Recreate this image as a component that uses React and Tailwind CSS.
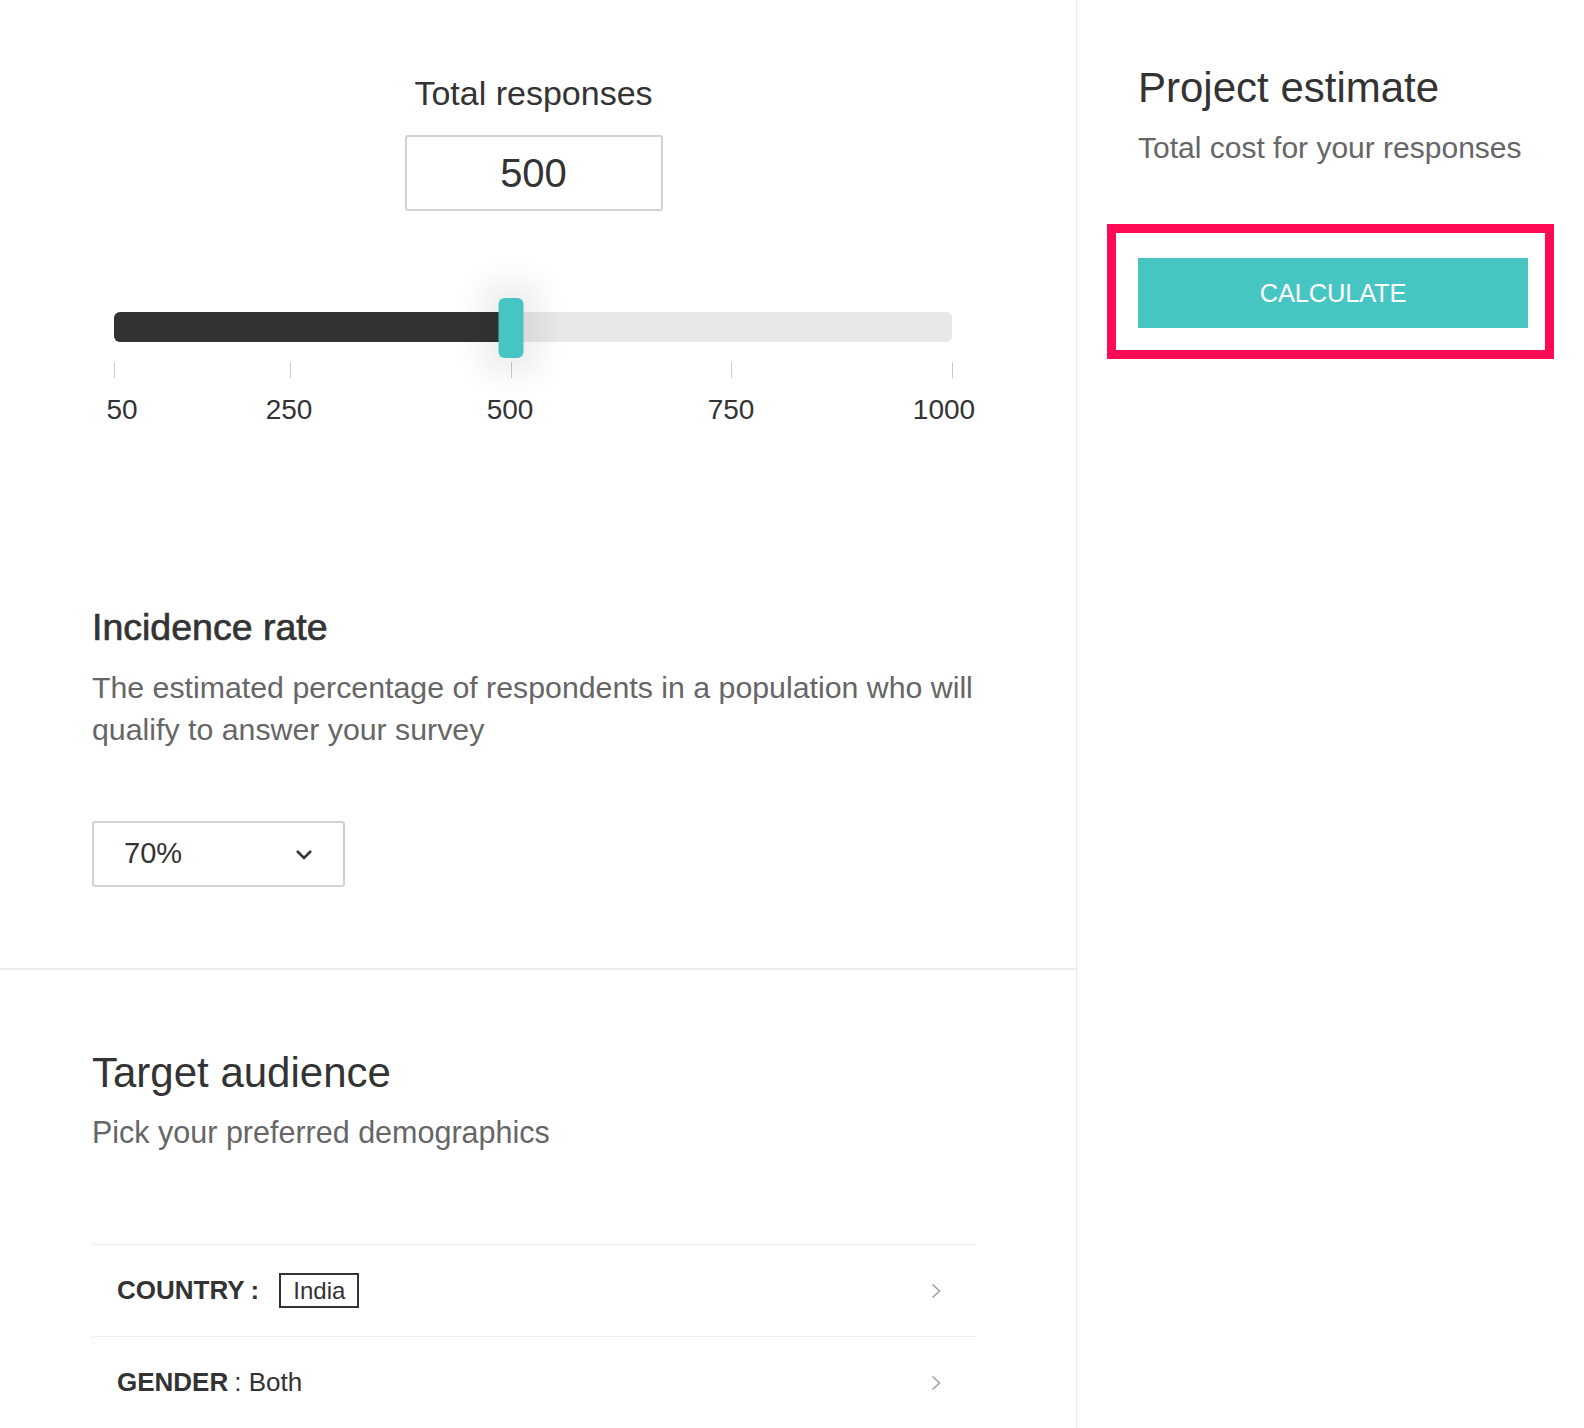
import { useState } from 'react';

const MIN = 50;
const MAX = 1000;
const TRACK_W = 838;

// label centres are nudged inwards at both ends so they stay under the track
const marks = [
  { value: 50, labelX: 8 },
  { value: 250, labelX: 175 },
  { value: 500, labelX: 396 },
  { value: 750, labelX: 617 },
  { value: 1000, labelX: 830 },
];

const toX = (v) => ((v - MIN) / (MAX - MIN)) * TRACK_W;

function Chevron({ className }) {
  return (
    <svg viewBox="0 0 10 16" className={className} fill="none" stroke="currentColor" strokeWidth="1.6">
      <path d="M1.5 1.5 L8.5 8 L1.5 14.5" />
    </svg>
  );
}

function ResponseSlider({ value }) {
  const x = toX(value);
  return (
    <div className="relative ml-[22px] mt-[86px] h-[129px] w-[838px]">
      <div className="absolute left-0 right-0 top-[15px] h-[30px] overflow-hidden rounded-[6px] bg-[#e8e8e8]">
        <div className="h-full bg-[#333333]" style={{ width: x }} />
      </div>
      {marks.map((m) => (
        <div key={m.value}>
          <div className="absolute top-[65px] h-[16px] w-px bg-[#cccccc]" style={{ left: toX(m.value) }} />
          <span
            className="absolute top-[97px] -translate-x-1/2 text-[28px] leading-[32px] text-[#333333]"
            style={{ left: m.labelX }}
          >
            {m.value}
          </span>
        </div>
      ))}
      <div
        className="absolute top-px h-[60px] w-[25px] -translate-x-1/2 rounded-[6px] bg-[#46c5c3] shadow-[0_0_30px_18px_rgba(0,0,0,0.07)]"
        style={{ left: x }}
      />
    </div>
  );
}

function AudienceRow({ label, children }) {
  return (
    <div className="flex h-[92px] items-center justify-between border-t border-dotted border-[#dddddd] pl-[25px] pr-[34px] text-[26px] text-[#333333]">
      <div className="flex items-center">
        <span className="font-bold">{label}</span>
        {children}
      </div>
      <Chevron className="h-[16px] w-[10px] text-[#a0a0a0]" />
    </div>
  );
}

export default function App() {
  const [responses] = useState(500);

  return (
    <div className="flex min-h-[1428px] w-full bg-white font-['Liberation_Sans',Arial,sans-serif] text-[#333333]">
      <div className="w-[1077px] shrink-0 border-r border-[#e9e9e9]">
        <section className="pb-[81px] pl-[92px] pr-[101px] pt-[73px]">
          <h2 className="text-center text-[34px] leading-[40px]">Total responses</h2>
          <div className="mx-auto mt-[22px] flex h-[76px] w-[258px] items-center justify-center rounded-[3px] border-2 border-[#d2d2d2] text-[40px]">
            {responses}
          </div>

          <ResponseSlider value={responses} />

          <h2 className="mt-[180px] text-[37.5px] leading-[42px] [-webkit-text-stroke:0.7px_#333333]">Incidence rate</h2>
          <p className="mt-[19px] text-[30.3px] leading-[42px] text-[#666666]">
            The estimated percentage of respondents in a population who will qualify to answer your survey
          </p>
          <button className="mt-[70px] flex h-[66px] w-[253px] items-center justify-between rounded-[3px] border-2 border-[#d2d2d2] pl-[30px] pr-[30px] text-[29px]">
            <span>70%</span>
            <svg viewBox="0 0 18 11" className="h-[11px] w-[18px]" fill="none" stroke="#333333" strokeWidth="2.6">
              <path d="M2 2 L9 9 L16 2" />
            </svg>
          </button>
        </section>

        <section className="border-t-2 border-[#ececec] pl-[92px] pr-[101px] pt-[79px]">
          <h2 className="text-[42px] leading-[48px]">Target audience</h2>
          <p className="mt-[17px] text-[30.5px] leading-[36px] text-[#666666]">Pick your preferred demographics</p>
          <div className="mt-[94px]">
            <AudienceRow label="COUNTRY">
              <span className="ml-[6px] font-bold">:</span>
              <span className="ml-[20px] flex h-[35px] items-center border-2 border-[#333333] px-[12px] text-[24px]">India</span>
            </AudienceRow>
            <AudienceRow label="GENDER">
              <span className="ml-[6px]">: Both</span>
            </AudienceRow>
          </div>
        </section>
      </div>

      <aside className="flex-1 pl-[61px] pt-[64px]">
        <h2 className="text-[42px] leading-[48px]">Project estimate</h2>
        <p className="mt-[18px] text-[30px] leading-[36px] text-[#666666]">Total cost for your responses</p>
        <div className="relative mt-[92px] w-[390px]">
          <button className="h-[70px] w-[390px] bg-[#46c5c3] text-[25.5px] tracking-[-0.2px] text-white">CALCULATE</button>
          <div className="pointer-events-none absolute -bottom-[31px] -left-[31px] -right-[26px] -top-[34px] border-[9px] border-[#ff0a55]" />
        </div>
      </aside>
    </div>
  );
}
